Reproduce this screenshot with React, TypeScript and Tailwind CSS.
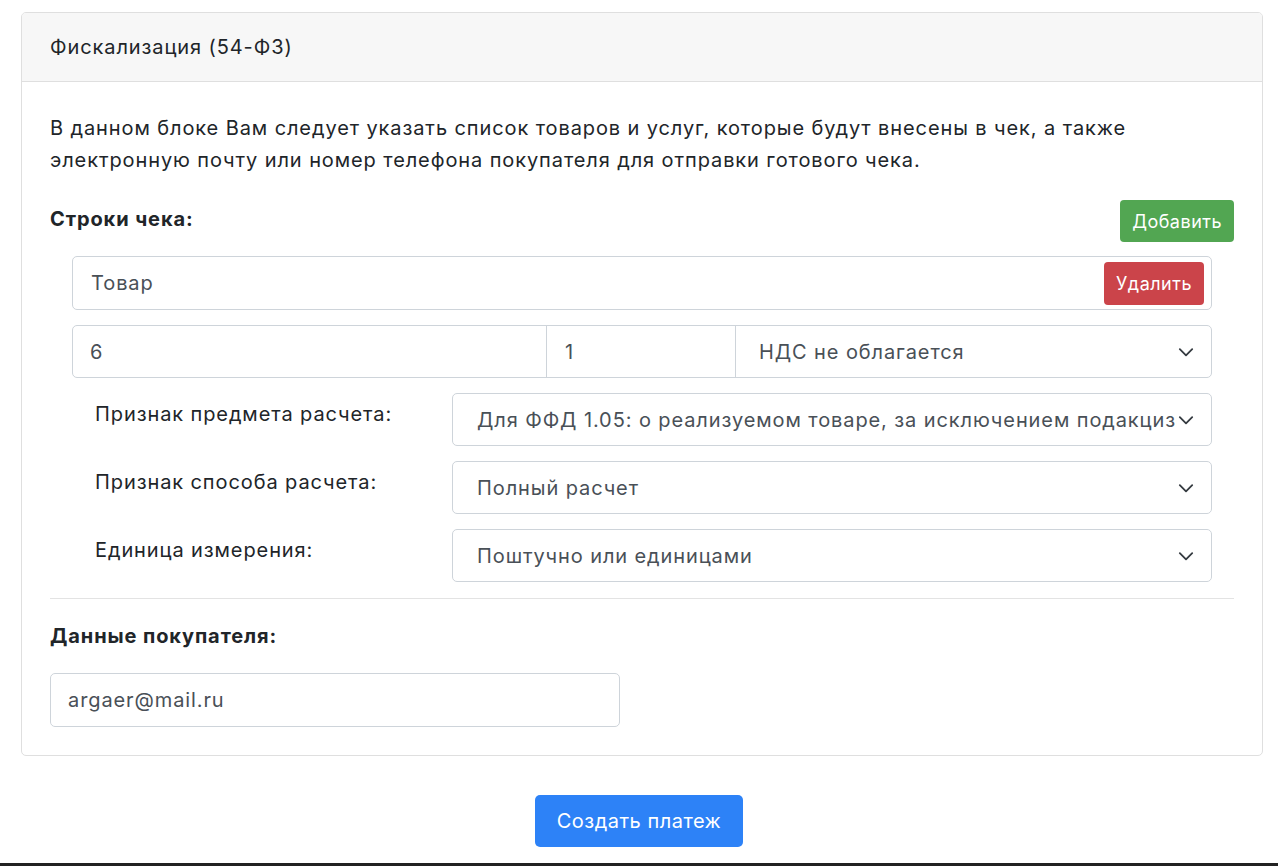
const font = { fontFamily: "Inter, 'Noto Sans', sans-serif" };

function Chevron() {
  return (
    <svg width="18" height="18" viewBox="0 0 16 16" fill="none" stroke="#343a40" strokeWidth="1.6" strokeLinecap="round" strokeLinejoin="round">
      <path d="M2.5 5.5l5.5 5.5 5.5-5.5" />
    </svg>
  );
}

function Select({ text }: { text: string }) {
  return (
    <div className="flex h-[53px] flex-1 items-center justify-between overflow-hidden rounded-[5px] border border-[#ced4da] bg-white pl-6 pr-4 text-[20px] text-[#495057]">
      <span className="overflow-hidden whitespace-nowrap pr-6">{text}</span>
      <div className="shrink-0"><Chevron /></div>
    </div>
  );
}

function Row({ label, value }: { label: string; value: string }) {
  return (
    <div className="flex items-start">
      <div className="w-[380px] pl-[23px] pt-[6px] text-[20px] text-[#212529]">{label}</div>
      <Select text={value} />
    </div>
  );
}

export default function App() {
  return (
    <div style={font} className="flex min-h-[866px] flex-col bg-white pt-3 tracking-[0.9px] text-[#212529]">
      <div className="mx-[21px] w-[1242px] overflow-hidden rounded-[5px] border border-[#dfdfdf]">
        <div className="flex h-[69px] items-center border-b border-[#dfdfdf] bg-[#f7f7f7] px-7 text-[20px]">
          Фискализация (54-ФЗ)
        </div>
        <div className="px-7 pb-7 pt-[30px]">
          <p className="text-[20px] leading-[32px]">
            В данном блоке Вам следует указать список товаров и услуг, которые будут внесены в чек, а также
            <br />
            электронную почту или номер телефона покупателя для отправки готового чека.
          </p>
          <div className="mt-[24px] flex items-start justify-between">
            <div className="pt-[4px] text-[20px] font-bold">Строки чека:</div>
            <button className="h-[42px] rounded-[4px] bg-[#52a652] px-3 text-[18px] tracking-[0.5px] text-white">Добавить</button>
          </div>
          <div className="mx-[22px] mt-[14px] flex flex-col">
            <div className="flex h-[54px] items-center justify-between rounded-[5px] border border-[#ced4da] pl-[18px] pr-[7px] text-[20px] text-[#495057]">
              <span>Товар</span>
              <button className="h-[43px] rounded-[4px] bg-[#cb444a] px-3 text-[18px] tracking-[0.5px] text-white">Удалить</button>
            </div>
            <div className="mt-[15px] flex h-[53px] rounded-[5px] border border-[#ced4da] text-[20px] text-[#495057]">
              <div className="flex w-[474px] items-center border-r border-[#ced4da] pl-[17px]">6</div>
              <div className="flex w-[189px] items-center border-r border-[#ced4da] pl-[18px]">1</div>
              <div className="flex flex-1 items-center justify-between pl-[23px] pr-4">
                <span>НДС не облагается</span>
                <Chevron />
              </div>
            </div>
            <div className="mt-[15px] flex flex-col gap-[15px]">
              <Row label="Признак предмета расчета:" value="Для ФФД 1.05: о реализуемом товаре, за исключением подакцизного товара" />
              <Row label="Признак способа расчета:" value="Полный расчет" />
              <Row label="Единица измерения:" value="Поштучно или единицами" />
            </div>
          </div>
          <div className="mt-[16px] border-t border-[#e3e3e3]" />
          <div className="mt-[22px] text-[20px] font-bold">Данные покупателя:</div>
          <div className="mt-[22px] flex h-[54px] w-[570px] items-center rounded-[5px] border border-[#ced4da] pl-[17px] text-[20px] text-[#495057]">
            argaer@mail.ru
          </div>
        </div>
      </div>
      <div className="mt-[39px] flex justify-center">
        <button className="h-[52px] w-[208px] rounded-[5px] bg-[#2d82f7] text-[20px] tracking-[0.5px] text-white">Создать платеж</button>
      </div>
      <div className="mt-auto h-[3px] bg-[#222]" />
    </div>
  );
}
